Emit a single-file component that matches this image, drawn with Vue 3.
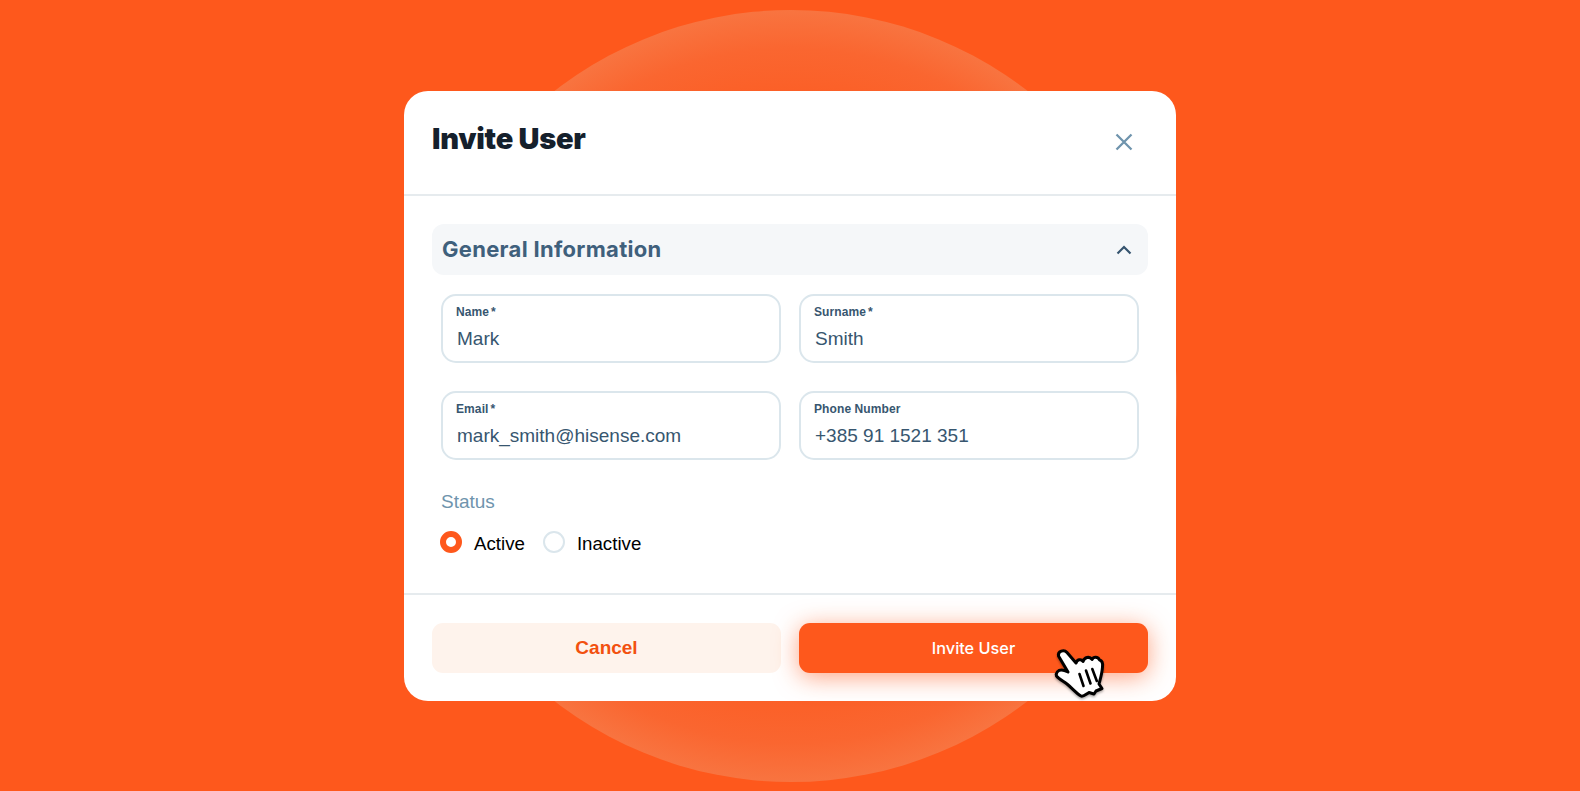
<script setup>
const fields = [
  { label: 'Name', required: true, value: 'Mark' },
  { label: 'Surname', required: true, value: 'Smith' },
  { label: 'Email', required: true, value: 'mark_smith@hisense.com' },
  { label: 'Phone Number', required: false, value: '+385 91 1521 351' },
]
</script>

<template>
  <div class="page">
    <div class="circle"></div>
    <div class="modal">
      <header class="head">
        <h1 class="title">Invite User</h1>
        <svg class="close" viewBox="0 0 18 18" width="18" height="18">
          <path d="M1.5 1.5 16.5 16.5M16.5 1.5 1.5 16.5" fill="none" stroke="#6f94ad" stroke-width="2.3" />
        </svg>
      </header>
      <section class="body">
        <div class="accordion">
          <span class="acc-title">General Information</span>
          <svg class="chev" viewBox="0 0 16 10" width="16" height="10">
            <path d="M1.5 8.5 8 2l6.500 6.500" fill="none" stroke="#36546f" stroke-width="2.200" />
          </svg>
        </div>
        <div class="grid">
          <div v-for="f in fields" :key="f.label" class="field">
            <span class="label">{{ f.label }}<i v-if="f.required" class="star">*</i></span>
            <span class="value">{{ f.value }}</span>
          </div>
        </div>
        <div class="status">Status</div>
        <div class="radios">
          <span class="radio on"></span><span class="r-text">Active</span>
          <span class="radio"></span><span class="r-text">Inactive</span>
        </div>
      </section>
      <footer class="foot">
        <button class="btn cancel">Cancel</button>
        <button class="btn invite">Invite User</button>
      </footer>
      <svg class="cursor" viewBox="0 0 56 56" width="56" height="56">
        <defs>
          <filter id="hs" x="-20%" y="-20%" width="140%" height="140%">
            <feDropShadow dx="0" dy="1.500" stdDeviation="1.200" flood-color="#000" flood-opacity=".35" />
          </filter>
        </defs>
        <path filter="url(#hs)" d="M6.500 10C5.500 5 12 3 15 6.500L24 17C25 13.500 29 12.500 31 15.500 32.500 11 37.500 10 40 13.500 41.500 10.500 46 10.500 47.500 14 49.500 14.500 51 17 50.500 21 50 28 48 34 47 38L50 42.500 44 45 42 48 37 46.500C33 49 31 51 29 50 24 47 20 42 15 38 11 35 7 33 4.500 30 3.500 27 6 24 9.500 24 12 24 14 25 16 26Z" fill="#fff" stroke="#000" stroke-width="3" stroke-linejoin="round" />
        <path d="M27.500 28 31.500 40M34 24.500 38.500 37.500M40.300 23 44.800 35" stroke="#000" stroke-width="2.600" stroke-linecap="round" fill="none" />
      </svg>
    </div>
  </div>
</template>

<style>
html, body { margin: 0; background: #fe581c; }
</style>

<style scoped>
.page {
  width: 1580px;
  height: 791px;
  background: #fe581c;
  display: flex;
  align-items: flex-start;
  justify-content: center;
  overflow: hidden;
  position: relative;
}
.circle {
  position: absolute;
  left: 405px;
  top: 10px;
  width: 772px;
  height: 772px;
  border-radius: 50%;
  background: radial-gradient(circle closest-side, #fd5a1f 0%, #fc5c22 72%, #fa6630 90%, #f87440 100%);
}
.modal {
  position: relative;
  margin-top: 91px;
  width: 772px;
  height: 610px;
  background: #fff;
  border-radius: 24px;
  display: flex;
  flex-direction: column;
  box-sizing: border-box;
}
.head {
  height: 105px;
  box-sizing: border-box;
  padding: 0 28px;
  border-bottom: 2px solid #e6ebee;
  display: flex;
  align-items: flex-start;
  justify-content: space-between;
}
.title {
  margin: 28px 0 0;
  font: 900 29px/40px Inter, sans-serif;
  letter-spacing: -.25px;
  color: #15202c;
}
.close { margin: 42px 15px 0 0; }
.body {
  padding: 28px 28px 0;
  height: 397px;
  box-sizing: border-box;
}
.accordion {
  height: 51px;
  background: #f5f7f9;
  border-radius: 12px;
  display: flex;
  align-items: center;
  justify-content: space-between;
  padding: 0 16px 0 10px;
}
.acc-title {
  font: 700 22px/30px Inter, sans-serif;
  letter-spacing: .3px;
  color: #3f607c;
  padding-bottom: 2px;
}
.grid {
  margin: 19px 9px 0 9px;
  display: grid;
  grid-template-columns: 340px 340px;
  column-gap: 18px;
  row-gap: 28px;
}
.field {
  height: 69px;
  box-sizing: border-box;
  border: 2px solid #dbe6ec;
  border-radius: 15px;
  padding: 8px 13px 0;
  display: flex;
  flex-direction: column;
}
.label {
  font: 700 12px/16px "Liberation Sans", sans-serif;
  letter-spacing: .1px;
  color: #37566f;
}
.star { font-style: normal; margin-left: 2px; }
.value {
  margin: 6px 0 0 1px;
  font: 400 19px/26px "Liberation Sans", sans-serif;
  color: #37566f;
}
.status {
  margin: 30px 0 0 9px;
  font: 400 19px/24px "Liberation Sans", sans-serif;
  color: #6f94ad;
}
.radios {
  margin: 16px 0 0 8px;
  display: flex;
  align-items: center;
  height: 24px;
}
.radio {
  width: 22px;
  height: 22px;
  box-sizing: border-box;
  border-radius: 50%;
  border: 2px solid #dbe6ec;
  background: #fff;
  margin-right: 12px;
}
.radio.on {
  border: 6.500px solid #fe581c;
}
.r-text {
  font: 400 18.700px/24px "Liberation Sans", sans-serif;
  color: #000;
  margin-right: 18px;
  padding-top: 3px;
}
.foot {
  flex: 1;
  border-top: 2px solid #e6ebee;
  padding: 28px 28px 0;
  display: flex;
  gap: 18px;
}
.btn {
  height: 50px;
  border: 0;
  border-radius: 11px;
  padding: 0;
  width: 349px;
}
.cancel {
  background: #fef3ec;
  color: #f2500f;
  font: 700 19px "Liberation Sans", sans-serif;
}
.invite {
  background: #fe581c;
  color: #fff;
  font: 500 16.300px Inter, sans-serif;
  box-shadow: 0 4px 24px rgba(254, 88, 28, .55);
}
.cursor {
  position: absolute;
  left: 648px;
  top: 555px;
}
</style>
